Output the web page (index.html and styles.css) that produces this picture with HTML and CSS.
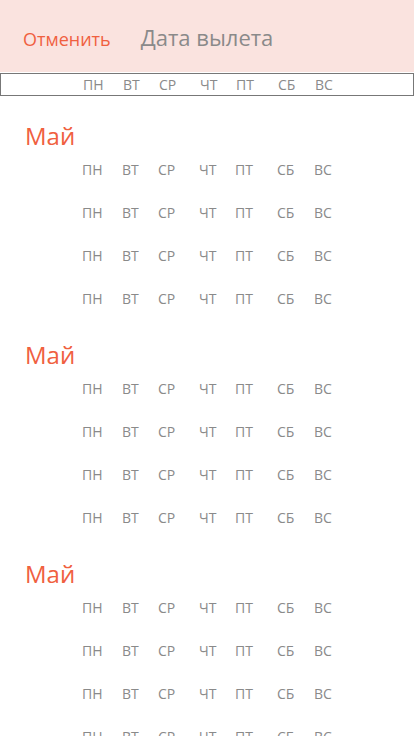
FILE: index.html
```html
<!DOCTYPE html>
<html lang="ru">
<head>
<meta charset="utf-8">
<link rel="stylesheet" href="styles.css">
</head>
<body>
<header class="topbar">
  <span class="cancel">Отменить</span>
  <span class="title">Дата вылета</span>
</header>
<div class="weekbar">
  <div class="days"><span>ПН</span><span>ВТ</span><span>СР</span><span>ЧТ</span><span>ПТ</span><span>СБ</span><span>ВС</span></div>
</div>
<main class="months">
  <section class="month">
    <h2 class="month-name">Май</h2>
    <div class="days row"><span>ПН</span><span>ВТ</span><span>СР</span><span>ЧТ</span><span>ПТ</span><span>СБ</span><span>ВС</span></div>
    <div class="days row"><span>ПН</span><span>ВТ</span><span>СР</span><span>ЧТ</span><span>ПТ</span><span>СБ</span><span>ВС</span></div>
    <div class="days row"><span>ПН</span><span>ВТ</span><span>СР</span><span>ЧТ</span><span>ПТ</span><span>СБ</span><span>ВС</span></div>
    <div class="days row"><span>ПН</span><span>ВТ</span><span>СР</span><span>ЧТ</span><span>ПТ</span><span>СБ</span><span>ВС</span></div>
  </section>
  <section class="month">
    <h2 class="month-name">Май</h2>
    <div class="days row"><span>ПН</span><span>ВТ</span><span>СР</span><span>ЧТ</span><span>ПТ</span><span>СБ</span><span>ВС</span></div>
    <div class="days row"><span>ПН</span><span>ВТ</span><span>СР</span><span>ЧТ</span><span>ПТ</span><span>СБ</span><span>ВС</span></div>
    <div class="days row"><span>ПН</span><span>ВТ</span><span>СР</span><span>ЧТ</span><span>ПТ</span><span>СБ</span><span>ВС</span></div>
    <div class="days row"><span>ПН</span><span>ВТ</span><span>СР</span><span>ЧТ</span><span>ПТ</span><span>СБ</span><span>ВС</span></div>
  </section>
  <section class="month">
    <h2 class="month-name">Май</h2>
    <div class="days row"><span>ПН</span><span>ВТ</span><span>СР</span><span>ЧТ</span><span>ПТ</span><span>СБ</span><span>ВС</span></div>
    <div class="days row"><span>ПН</span><span>ВТ</span><span>СР</span><span>ЧТ</span><span>ПТ</span><span>СБ</span><span>ВС</span></div>
    <div class="days row"><span>ПН</span><span>ВТ</span><span>СР</span><span>ЧТ</span><span>ПТ</span><span>СБ</span><span>ВС</span></div>
    <div class="days row"><span>ПН</span><span>ВТ</span><span>СР</span><span>ЧТ</span><span>ПТ</span><span>СБ</span><span>ВС</span></div>
  </section>
</main>
</body>
</html>
```
FILE: styles.css
```css
* { box-sizing: border-box; }
html, body { margin: 0; padding: 0; background: #fff; }
body {
  font-family: "Open Sans", "Noto Sans", sans-serif;
  width: 414px;
  height: 736px;
  overflow: hidden;
}
.topbar {
  height: 72px;
  background: #fae3df;
  display: flex;
  align-items: baseline;
  padding: 22px 0 0 23px;
}
.cancel {
  color: #f0603f;
  font-size: 18px;
  line-height: 30px;
}
.title {
  color: #8a8a8a;
  font-size: 22px;
  line-height: 30px;
  margin-left: 30px;
}
.weekbar {
  margin-top: 1px;
  height: 23px;
  border: 1px solid #777;
}
.days {
  display: grid;
  grid-template-columns: 40px 36px 41px 36px 42px 37px auto;
  padding-left: 82px;
  font-size: 14px;
  line-height: 21px;
  color: #8a8a8a;
}
.months { padding-top: 5px; }
.month-name {
  margin: 0;
  padding: 20px 0 0 25px;
  height: 47px;
  font-weight: normal;
  font-size: 24px;
  line-height: 29px;
  color: #f0603f;
}
.row { line-height: 43px; }
```
